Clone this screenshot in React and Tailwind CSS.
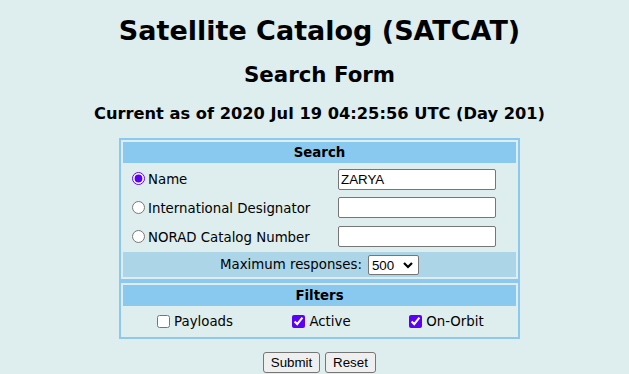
import React from "react";

const V = { fontFamily: '"DejaVu Sans", Verdana, sans-serif' };
const A = { fontFamily: '"Liberation Sans", Arial, sans-serif' };

function Radio({ checked }) {
  return (
    <input
      type="radio"
      name="k"
      defaultChecked={checked}
      className="m-0 h-[13px] w-[13px] accent-[#5b00f5]"
    />
  );
}

function Check({ checked, label }) {
  return (
    <label className="flex items-center gap-[4px]">
      <input
        type="checkbox"
        defaultChecked={checked}
        className="m-0 h-[13px] w-[13px] accent-[#5b00f5]"
      />
      <span>{label}</span>
    </label>
  );
}

function TextBox({ value }) {
  return (
    <input
      type="text"
      defaultValue={value}
      className="h-[21px] w-[158px] rounded-[2px] border border-[#767676] bg-white px-[2px] text-[13.33px] text-black"
      style={A}
    />
  );
}

export default function App() {
  return (
    <div className="h-[374px] w-full overflow-hidden bg-[#deeded] text-black" style={V}>
      <div className="flex flex-col items-center pl-[10px]">
        <h1 className="mt-[15px] text-[27px] font-bold leading-[31px]">Satellite Catalog (SATCAT)</h1>
        <h2 className="mt-[16px] text-[21.33px] font-bold leading-[25px]">Search Form</h2>
        <h3 className="mt-[17px] text-[16.25px] font-bold leading-[19px]">
          Current as of 2020 Jul 19 04:25:56 UTC (Day 201)
        </h3>

        <div className="mt-[15px] w-[401px] text-[13.33px]">
          <div className="flex flex-col gap-[2px] border-2 border-[#8cc8ef] p-[2px]">
            <div className="flex h-[21px] items-center justify-center bg-[#89c9ef] font-bold">Search</div>
            <div className="flex h-[27px] items-center pt-[1px]">
              <div className="flex w-[215px] items-center gap-[3px] pl-[9px]">
                <Radio checked />
                <span className="pt-[2px]">Name</span>
              </div>
              <TextBox value="ZARYA" />
            </div>
            <div className="flex h-[27px] items-center">
              <div className="flex w-[215px] items-center gap-[3px] pl-[9px]">
                <Radio />
                <span className="pt-[2px]">International Designator</span>
              </div>
              <TextBox value="" />
            </div>
            <div className="flex h-[27px] items-center">
              <div className="flex w-[215px] items-center gap-[3px] pl-[9px]">
                <Radio />
                <span className="pt-[2px]">NORAD Catalog Number</span>
              </div>
              <TextBox value="" />
            </div>
            <div className="flex h-[25px] items-center justify-center gap-[6px] bg-[#acd6e8]">
              <span>Maximum responses:</span>
              <div className="relative h-[20px] w-[51px]">
                <select
                  defaultValue="500"
                  className="h-[20px] w-[51px] appearance-none rounded-[2px] border border-[#767676] bg-white pl-[3px] text-[13.33px] text-black"
                  style={A}
                >
                  <option>100</option>
                  <option>500</option>
                  <option>1000</option>
                </select>
                <svg
                  className="pointer-events-none absolute right-[6px] top-[6px]"
                  width="10"
                  height="8"
                  viewBox="0 0 10 8"
                >
                  <path d="M1 2 L5 6 L9 2" fill="none" stroke="#000" strokeWidth="2.2" />
                </svg>
              </div>
            </div>
          </div>

          <div className="flex flex-col gap-[2px] border-2 border-[#8cc8ef] p-[2px]">
            <div className="flex h-[21px] items-center justify-center bg-[#89c9ef] font-bold">Filters</div>
            <div className="grid h-[27px] grid-cols-3 items-center">
              <div className="flex justify-center pl-[13px]"><Check label="Payloads" /></div>
              <div className="flex justify-center pl-[4px]"><Check checked label="Active" /></div>
              <div className="flex justify-center pr-[8px]"><Check checked label="On-Orbit" /></div>
            </div>
          </div>
        </div>

        <div className="mt-[13px] flex gap-[5px] text-[13.33px]" style={A}>
          <button className="h-[21px] w-[57px] rounded-[3px] border border-[#767676] bg-[#efefef] text-black">Submit</button>
          <button className="h-[21px] w-[51px] rounded-[3px] border border-[#767676] bg-[#efefef] text-black">Reset</button>
        </div>
      </div>
    </div>
  );
}
